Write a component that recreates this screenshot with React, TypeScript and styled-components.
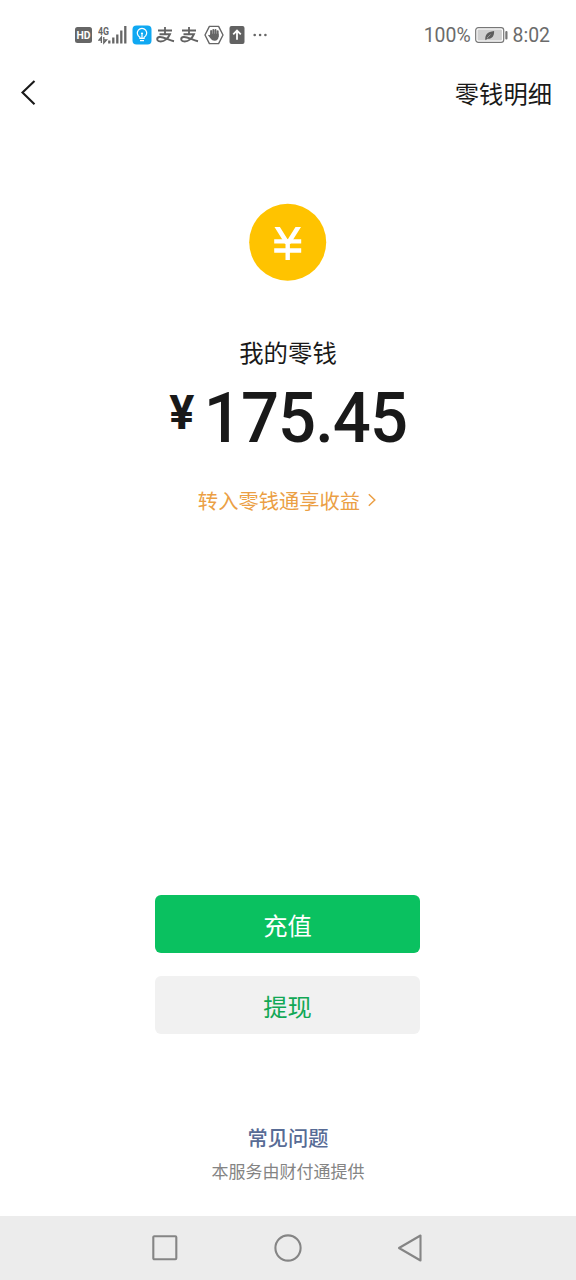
import React from 'react';
import styled, { createGlobalStyle } from 'styled-components';

const GlobalStyle = createGlobalStyle`
  *, *::before, *::after { box-sizing: border-box; }
  body { margin: 0; background: #fff; }
  button { border: 0; padding: 0; background: none; font: inherit; color: inherit; }
  svg { display: block; flex: none; }
`;

const Screen = styled.div`
  display: flex;
  flex-direction: column;
  width: 576px;
  height: 1280px;
  background: #fff;
  color: #191919;
  font-family: 'Noto Sans CJK SC', sans-serif;
`;

const StatusBar = styled.header`
  display: flex;
  align-items: center;
  justify-content: space-between;
  height: 70px;
  padding: 0 26px 0 74px;
  color: #6b6b6b;
  font-family: Roboto, sans-serif;
`;

const StatusGroup = styled.div<{ $gap: number }>`
  display: flex;
  align-items: center;
  gap: ${(p) => p.$gap}px;
`;

const StatusText = styled.span`
  padding-top: 2px;
  font-size: 19.4px;
  line-height: 24px;
`;

const NavBar = styled.nav`
  display: flex;
  align-items: center;
  justify-content: space-between;
  height: 46px;
  padding: 0 24px 0 20px;
`;

const NavLink = styled.button`
  font-size: 24.3px;
  line-height: 36px;
`;

const Wallet = styled.main`
  display: flex;
  flex-direction: column;
  align-items: center;
  flex: 1;
  padding-top: 87px;
`;

const Label = styled.h1`
  margin: 53px 0 0;
  font-size: 24.4px;
  font-weight: 400;
  line-height: 36px;
`;

const Amount = styled.div`
  display: flex;
  align-items: flex-start;
  height: 72px;
  margin-top: 12px;
  font-family: Roboto, sans-serif;
  font-weight: 500;
  transform: scaleX(0.957);
`;

const Currency = styled.span`
  width: 36px;
  font-size: 49px;
  font-weight: 700;
  line-height: 61px;
`;

const Figure = styled.span`
  font-size: 70px;
  line-height: 73px;
  letter-spacing: -1px;
`;

const EarnLink = styled.button`
  display: flex;
  align-items: center;
  gap: 8px;
  margin-top: 31px;
  color: #eb9f45;
  font-size: 20.3px;
  line-height: 30px;
`;

const Actions = styled.div`
  display: flex;
  flex-direction: column;
  gap: 23px;
  margin: auto 1px 0 0;
`;

const ActionButton = styled.button<{ $primary?: boolean }>`
  width: 265px;
  height: 58px;
  border-radius: 6px;
  background: ${(p) => (p.$primary ? '#0ac160' : '#f1f1f1')};
  color: ${(p) => (p.$primary ? '#fff' : '#12a855')};
  font-size: 24.3px;
  line-height: 60px;
`;

const Footer = styled.footer`
  display: flex;
  flex-direction: column;
  align-items: center;
  gap: 5px;
  margin-top: 89px;
  padding-bottom: 32px;
`;

const HelpLink = styled.a`
  color: #576b95;
  font-size: 20.2px;
  font-weight: 500;
  line-height: 30px;
`;

const Provider = styled.p`
  margin: 0;
  color: #848484;
  font-size: 17px;
  line-height: 26px;
`;

const SystemBar = styled.div`
  display: flex;
  align-items: center;
  justify-content: space-between;
  height: 64px;
  padding: 0 153px 0 151px;
  background: #ececec;
`;

const HdIcon = () => (
  <svg width="19" height="18" viewBox="0 0 19 18">
    <rect x="1" y="1" width="17" height="16" rx="2.5" fill="#666" />
    <text x="9.5" y="13.2" fill="#fff" fontFamily="Roboto, sans-serif" fontSize="11.5" fontWeight="700" textAnchor="middle" textLength="14" lengthAdjust="spacingAndGlyphs">HD</text>
  </svg>
);

const SignalIcon = () => (
  <svg width="29" height="20" viewBox="0 0 29 20">
    <text x="0" y="9.5" fill="#666" fontFamily="Roboto, sans-serif" fontSize="11" fontWeight="700" textLength="11" lengthAdjust="spacingAndGlyphs">4G</text>
    <path d="M3.4 18v-6L.8 15.2h2.6M5.8 12v6l2.8-3.2H5.8" stroke="#666" strokeWidth="1.3" fill="none" />
    <path d="M11.3 18.5v-3M15.3 18.5v-6M19.3 18.5V9.5M23.3 18.5V5.5M27.3 18.5V1" stroke="#666" strokeWidth="2.3" />
  </svg>
);

const BulbIcon = () => (
  <svg width="20" height="20" viewBox="0 0 20 20">
    <rect x=".5" y=".5" width="19" height="19" rx="4" fill="#0fa8f2" />
    <path d="M7.9 13.4v-1.2a4.7 4.7 0 1 1 4.2 0v1.2Z" fill="none" stroke="#fff" strokeWidth="1.2" />
    <path d="M8 15.6h4M10 13V9.5" stroke="#fff" strokeWidth="1.2" />
    <circle cx="10" cy="8.6" r="1.1" fill="#fff" />
  </svg>
);

const PayIcon = () => (
  <svg width="19" height="18" viewBox="0 0 19 18" fill="none" stroke="#626262">
    <path d="M2 4.5h14M9 1v7" strokeWidth="1.8" />
    <path d="M3.5 8.2H14C12.5 12 8.5 15.8 4 15.4.5 15 .2 11.5 3.5 11c4-.5 8.5 3 14.5 4.3" strokeWidth="1.9" />
  </svg>
);

const HandIcon = () => (
  <svg width="20" height="20" viewBox="0 0 20 20">
    <path d="M5.4 1.4h9.2L19 10l-4.4 8.6H5.4L1 10Z" fill="none" stroke="#666" strokeWidth="1.4" strokeLinejoin="round" />
    <path d="M7.1 6v5M9.3 4.9V11M11.5 4.9V11M13.7 6.2v5" stroke="#666" strokeWidth="1.9" strokeLinecap="round" />
    <path d="M6.2 8.8h8.4v2.8c0 2.5-1.5 4.2-3.9 4.2-2 0-3-.8-3.9-2L4 10.2c.7-.9 1.5-.6 2.2.1Z" fill="#666" />
  </svg>
);

const UploadIcon = () => (
  <svg width="18" height="20" viewBox="0 0 18 20">
    <rect x=".5" y="1" width="15" height="18" rx="2" fill="#626262" />
    <path d="M8 14.8V6M4.2 9.3 8 5.5l3.8 3.8" fill="none" stroke="#fff" strokeWidth="1.8" />
  </svg>
);

const MoreIcon = () => (
  <svg width="16" height="4" viewBox="0 0 16 4" fill="#666">
    <circle cx="2.7" cy="2" r="1.3" />
    <circle cx="8.1" cy="2" r="1.3" />
    <circle cx="13.4" cy="2" r="1.3" />
  </svg>
);

const BatteryIcon = () => (
  <svg width="34" height="18" viewBox="0 0 34 18">
    <rect x=".7" y="1.7" width="28" height="14.6" rx="2.6" fill="#fff" stroke="#777" strokeWidth="1.2" />
    <rect x="2.5" y="3.4" width="24.4" height="11.2" rx="1" fill="#cfcfcf" />
    <path d="M10.3 13.5c-.3-4.5 2-7.7 8.8-8.5.2 5-2 8.3-7 7.8l-1.2 1.4Z" fill="#5c5c5c" />
    <path d="m12 12 3.5-3.5" stroke="#cfcfcf" strokeWidth=".5" />
    <rect x="30.3" y="5" width="2.2" height="8.4" rx="1" fill="#777" />
  </svg>
);

const BackIcon = () => (
  <svg width="18" height="28" viewBox="0 0 18 28">
    <path d="M14.5 2 2.5 13.5l12 11.7" fill="none" stroke="#191919" strokeWidth="2.1" />
  </svg>
);

const CoinIcon = () => (
  <svg width="78" height="78" viewBox="0 0 78 78">
    <circle cx="38.7" cy="39.3" r="38.5" fill="#ffc300" />
    <path d="M25.5 24h5.4l7.8 12.5L46.5 24H52L41.3 41h-5.2Z" fill="#fff" />
    <path d="M25.2 38.4h27M25.2 47.5h27M38.7 38v19" fill="none" stroke="#fff" strokeWidth="4.4" />
  </svg>
);

const ChevronIcon = () => (
  <svg width="10" height="16" viewBox="0 0 10 16">
    <path d="m.8 2.2 6 5.8-6 5.8" fill="none" stroke="#eb9f45" strokeWidth="1.5" />
  </svg>
);

const RecentsIcon = () => (
  <svg width="28" height="28" viewBox="0 0 28 28">
    <rect x="2.3" y="2.3" width="23" height="23" rx="1" fill="none" stroke="#858585" strokeWidth="2.1" />
  </svg>
);

const HomeIcon = () => (
  <svg width="28" height="28" viewBox="0 0 28 28">
    <circle cx="14" cy="14" r="12.6" fill="none" stroke="#858585" strokeWidth="2.1" />
  </svg>
);

const ReturnIcon = () => (
  <svg width="26" height="28" viewBox="0 0 26 28">
    <path d="M23.5 1.5v25L2 14Z" fill="none" stroke="#858585" strokeWidth="2.1" strokeLinejoin="round" />
  </svg>
);

export default function App() {
  return (
    <Screen>
      <GlobalStyle />
      <StatusBar>
        <StatusGroup $gap={4.8}>
          <HdIcon />
          <SignalIcon />
          <BulbIcon />
          <PayIcon />
          <PayIcon />
          <HandIcon />
          <UploadIcon />
          <MoreIcon />
        </StatusGroup>
        <StatusGroup $gap={4}>
          <StatusText>100%</StatusText>
          <BatteryIcon />
          <StatusText>8:02</StatusText>
        </StatusGroup>
      </StatusBar>
      <NavBar>
        <BackIcon />
        <NavLink>零钱明细</NavLink>
      </NavBar>
      <Wallet>
        <CoinIcon />
        <Label>我的零钱</Label>
        <Amount>
          <Currency>¥</Currency>
          <Figure>175.45</Figure>
        </Amount>
        <EarnLink>
          转入零钱通享收益
          <ChevronIcon />
        </EarnLink>
        <Actions>
          <ActionButton $primary>充值</ActionButton>
          <ActionButton>提现</ActionButton>
        </Actions>
        <Footer>
          <HelpLink>常见问题</HelpLink>
          <Provider>本服务由财付通提供</Provider>
        </Footer>
      </Wallet>
      <SystemBar>
        <RecentsIcon />
        <HomeIcon />
        <ReturnIcon />
      </SystemBar>
    </Screen>
  );
}
